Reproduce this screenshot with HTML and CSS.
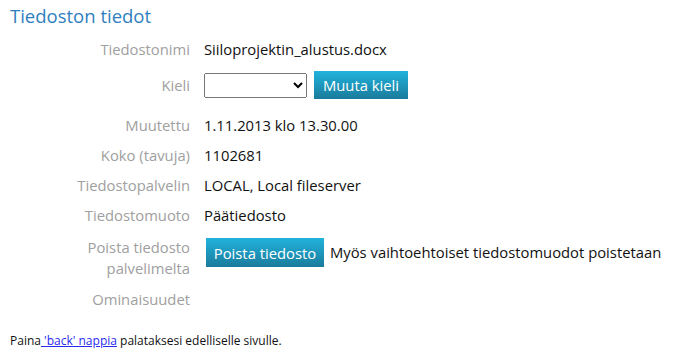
FILE: index.html
```html
<!DOCTYPE html>
<html lang="fi">
<head>
<meta charset="utf-8">
<title>Tiedoston tiedot</title>
<link rel="stylesheet" href="styles.css">
</head>
<body>
<h1 class="title">Tiedoston tiedot</h1>
<div class="details">
  <div class="label">Tiedostonimi</div>
  <div class="value">Siiloprojektin_alustus.docx</div>

  <div class="label label-lang">Kieli</div>
  <div class="value controls controls-lang">
    <select class="lang"><option></option></select>
    <button class="btn btn-lang" type="button">Muuta kieli</button>
  </div>

  <div class="label">Muutettu</div>
  <div class="value">1.11.2013 klo 13.30.00</div>

  <div class="label">Koko (tavuja)</div>
  <div class="value">1102681</div>

  <div class="label">Tiedostopalvelin</div>
  <div class="value">LOCAL, Local fileserver</div>

  <div class="label">Tiedostomuoto</div>
  <div class="value">Päätiedosto</div>

  <div class="label label-delete">Poista tiedosto palvelimelta</div>
  <div class="value controls controls-delete">
    <button class="btn btn-delete" type="button">Poista tiedosto</button>
    <span class="note">Myös vaihtoehtoiset tiedostomuodot poistetaan</span>
  </div>

  <div class="label">Ominaisuudet</div>
  <div class="value"></div>
</div>
<p class="footer">Paina<a href="#"> 'back' nappia</a> palataksesi edelliselle sivulle.</p>
</body>
</html>
```

FILE: styles.css
```css
html, body {
  background: #ffffff;
}
body {
  margin: 0;
  padding: 4px 10px 0 10px;
  font-family: "Open Sans", "Noto Sans", sans-serif;
  color: #000000;
}
.title {
  margin: 0;
  font-size: 18.5px;
  line-height: 24px;
  font-weight: normal;
  color: #2f7fc0;
}
.details {
  display: grid;
  grid-template-columns: 180px 1fr;
  column-gap: 14px;
  align-items: start;
  margin-top: 7px;
  font-size: 14.8px;
  line-height: 21px;
}
.label {
  text-align: right;
  color: #a0a0a0;
  padding: 4px 0 5px 0;
}
.label-lang {
  padding-top: 10px;
}
.label-delete {
  padding: 6px 0 6px 60px;
}
.value {
  color: #111111;
  min-height: 30px;
  padding: 4px 0 5px 0;
  box-sizing: border-box;
}
.controls {
  display: flex;
  align-items: center;
  padding: 0;
}
.controls-lang {
  height: 46px;
  gap: 7px;
}
.controls-delete {
  align-items: flex-start;
  padding-top: 7px;
  gap: 6px;
}
.lang {
  width: 103px;
  height: 25px;
  margin-top: -6px;
  font-family: inherit;
  font-size: 13px;
}
.btn {
  font-family: inherit;
  font-size: 14.8px;
  color: #ffffff;
  border: none;
  border-radius: 0;
  padding: 0;
  background: linear-gradient(#21b3dd, #1a7b9b);
  cursor: pointer;
  text-align: center;
}
.btn-lang {
  width: 94px;
  height: 28px;
  margin-top: -6px;
}
.btn-delete {
  width: 118px;
  height: 29px;
  margin-left: 2px;
}
.note {
  line-height: 29px;
}
.footer {
  margin: 18px 0 0 0;
  font-size: 12px;
  line-height: 16px;
  color: #111111;
}
.footer a {
  color: #2a2aee;
}
```
